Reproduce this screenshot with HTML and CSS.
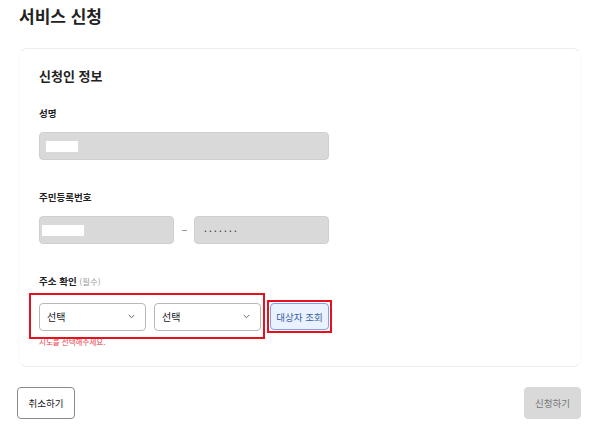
FILE: index.html
```html
<!DOCTYPE html>
<html lang="ko">
<head>
<meta charset="utf-8">
<link rel="stylesheet" href="styles.css">
</head>
<body>
<h1 class="page-title">서비스 신청</h1>
<section class="card">
  <h2 class="card-title">신청인 정보</h2>
  <div class="field">
    <div class="label">성명</div>
    <div class="input input-wide"><span class="mask mask-name"></span></div>
  </div>
  <div class="field">
    <div class="label">주민등록번호</div>
    <div class="rrn">
      <div class="input input-half"><span class="mask mask-rrn"></span></div>
      <span class="dash"></span>
      <div class="input input-half"><span class="dots">·······</span></div>
    </div>
  </div>
  <div class="field field-last">
    <div class="label">주소 확인 <span class="req">(필수)</span></div>
    <div class="addr-row">
      <div class="selects">
        <div class="select"><span>선택</span><svg width="7" height="5" viewBox="0 0 7 5"><path d="M0.8 1 L3.5 3.7 L6.2 1" fill="none" stroke="#555" stroke-width="0.9"/></svg></div>
        <div class="select"><span>선택</span><svg width="7" height="5" viewBox="0 0 7 5"><path d="M0.8 1 L3.5 3.7 L6.2 1" fill="none" stroke="#555" stroke-width="0.9"/></svg></div>
      </div>
      <div class="btn-wrap"><button class="btn-lookup">대상자 조회</button></div>
    </div>
    <div class="error">시도를 선택해주세요.</div>
  </div>
</section>
<div class="actions">
  <button class="btn btn-cancel">취소하기</button>
  <button class="btn btn-submit">신청하기</button>
</div>
</body>
</html>
```
FILE: styles.css
```css
* { box-sizing: border-box; }
html, body { margin: 0; padding: 0; background: #fff; }
body {
  width: 600px;
  height: 445px;
  padding: 0 19px;
  font-family: "Noto Sans CJK KR", "Noto Sans", sans-serif;
  color: #222;
  overflow: hidden;
}
.page-title {
  margin: 3px 0 0;
  font-size: 17px;
  line-height: 26px;
  font-weight: 700;
  color: #222;
  height: 45px;
}
.card {
  border: 1px solid #ececec;
  border-left-color: #fafafa;
  border-right-color: #fafafa;
  border-radius: 8px;
  padding: 18px 19px 20px;
  height: 319px;
}
.card-title {
  margin: 0;
  font-size: 13px;
  line-height: 18px;
  font-weight: 700;
  color: #222;
}
.field { margin-top: 21px; }
.field + .field { margin-top: 30px; }
.label {
  font-size: 9.5px;
  line-height: 14px;
  font-weight: 700;
  color: #222;
  margin-bottom: 12px;
}
.req { font-weight: 400; color: #999; font-size: 8.5px; }
.input {
  height: 28px;
  background: #d9d9d9;
  border: 1px solid #cfcfcf;
  border-radius: 4px;
  display: flex;
  align-items: center;
}
.input-wide { width: 290px; }
.input-half { width: 135px; }
.mask { display: block; background: #fff; }
.mask-name { width: 32px; height: 11px; margin-left: 6px; }
.mask-rrn { width: 42px; height: 11px; margin-left: 2px; }
.rrn { display: flex; align-items: center; gap: 7px; }
.dash { width: 5px; height: 1px; background: #999; margin-left: 1px; }
.dots { margin-left: 9px; font-size: 10px; letter-spacing: 2.2px; color: #333; }
.addr-row { display: flex; align-items: center; gap: 6px; margin-top: 12px; }
.selects { display: flex; gap: 8px; position: relative; }
.selects::after {
  content: "";
  position: absolute;
  top: -10px; bottom: -8px; left: -10px; right: -4px;
  border: 2px solid #e8101c;
  pointer-events: none;
}
.select {
  width: 107px;
  height: 28px;
  border: 1px solid #b8b8b8;
  border-radius: 4px;
  background: #fff;
  display: flex;
  align-items: center;
  justify-content: space-between;
  padding: 0 10px 0 7px;
  font-size: 10px;
  color: #222;
}
.btn-wrap { border: 2px solid #e8101c; padding: 1px; }
.btn-lookup {
  display: block;
  width: 59px;
  height: 27px;
  background: #eaf2ff;
  border: 1px solid #7da2ee;
  border-radius: 4px;
  color: #3a5ea8;
  font-family: inherit;
  font-size: 9.5px;
  padding: 0;
}
.error {
  margin-top: 4px;
  font-size: 7.5px;
  line-height: 10px;
  color: #e8454f;
}
.actions {
  display: flex;
  justify-content: space-between;
  margin-top: 20px;
  margin-left: -2px;
}
.btn {
  height: 32px;
  border-radius: 4px;
  font-family: inherit;
  font-size: 9.5px;
  padding: 0;
}
.btn-cancel {
  width: 58px;
  background: #fff;
  border: 1px solid #8a8a8a;
  color: #222;
}
.btn-submit {
  width: 57px;
  background: #d9d9d9;
  border: 1px solid #d9d9d9;
  color: #777;
}
```
